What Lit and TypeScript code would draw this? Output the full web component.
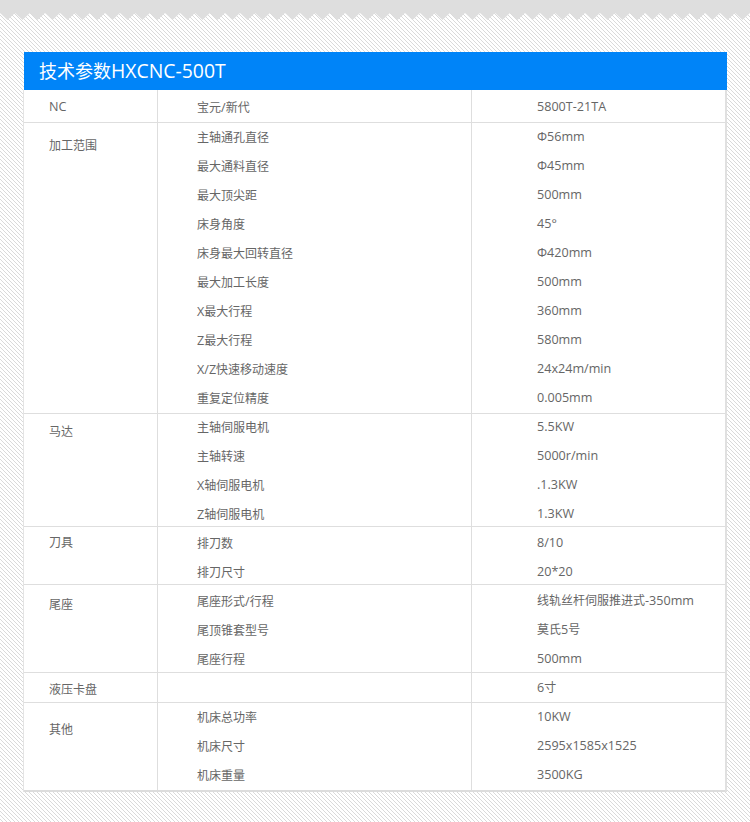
import { LitElement, html, css, svg } from "lit";
import { customElement } from "lit/decorators.js";

type Row = [string, string];
type Group = { label: string; h: number; lt: number; mt: number; rt: number; rows: Row[] };

const groups: Group[] = [
  { label: "NC", h: 32, lt: 4, mt: 5, rt: 4, rows: [["宝元/新代", "5800T-21TA"]] },
  { label: "加工范围", h: 290, lt: 10, mt: 2, rt: 1, rows: [
    ["主轴通孔直径", "Φ56mm"], ["最大通料直径", "Φ45mm"], ["最大顶尖距", "500mm"], ["床身角度", "45°"],
    ["床身最大回转直径", "Φ420mm"], ["最大加工长度", "500mm"], ["X最大行程", "360mm"], ["Z最大行程", "580mm"],
    ["X/Z快速移动速度", "24x24m/min"], ["重复定位精度", "0.005mm"] ] },
  { label: "马达", h: 112, lt: 5, mt: 1, rt: 0, rows: [
    ["主轴伺服电机", "5.5KW"], ["主轴转速", "5000r/min"], ["X轴伺服电机", ".1.3KW"], ["Z轴伺服电机", "1.3KW"] ] },
  { label: "刀具", h: 57, lt: 3, mt: 4, rt: 3, rows: [["排刀数", "8/10"], ["排刀尺寸", "20*20"]] },
  { label: "尾座", h: 87, lt: 7, mt: 4, rt: 3, rows: [
    ["尾座形式/行程", "线轨丝杆伺服推进式-350mm"], ["尾顶锥套型号", "莫氏5号"], ["尾座行程", "500mm"] ] },
  { label: "液压卡盘", h: 29, lt: 4, mt: 0, rt: 2, rows: [["", "6寸"]] },
  { label: "其他", h: 87, lt: 14, mt: 2, rt: 1, rows: [
    ["机床总功率", "10KW"], ["机床尺寸", "2595x1585x1525"], ["机床重量", "3500KG"] ] },
];

const teeth = Array.from({ length: 51 }, (_, i) => i * 15);
const zigzag = "M0 0H750V13L750 13" + teeth.map((x) => `L${750 - x - 7.5} 20L${750 - x - 15} 13`).join("") + "Z";

@customElement("app-root")
export class AppRoot extends LitElement {
  static styles = css`
    :host { display: block; width: 750px; height: 822px; overflow: hidden; background-color: #fff;
      background-image: linear-gradient(45deg, #dadada 15%, #fff 15%, #fff 50%, #dadada 50%, #dadada 65%, #fff 65%);
      background-size: 4px 4px;
      font-family: "Open Sans", "Noto Sans CJK SC", sans-serif; color: #666; font-size: 12px; }
    .page { display: flex; flex-direction: column; position: relative; padding: 52px 23px 0 24px; }
    .edge { position: absolute; left: 0; top: 0; width: 750px; height: 22px; }
    .title { height: 38px; background: #0084f8; color: #fff; font-size: 18px; line-height: 38px; padding-left: 15px;
      box-sizing: border-box; }
    .title .lat { font-size: 19.4px; }
    .table { width: 701px; background: #fff; border-bottom: 2px solid #dcdcdc; box-shadow: 2px 0 0 #e0e0e0, -1px 0 0 #e4e4e4; }
    .group { display: grid; grid-template-columns: 134px 314px 1fr; border-bottom: 1px solid #dedede; }
    .group:last-child { border-bottom: 0; }
    .cell { display: flex; flex-direction: column; gap: 4px; white-space: pre; box-sizing: border-box; }
    .label { padding-left: 25px; border-right: 1px solid #dedede; }
    .mid { padding-left: 39px; border-right: 1px solid #dedede; }
    .right { padding-left: 65px; }
    .line { height: 25px; line-height: 25px; }
    .lat { font-size: 12.6px; }
  `;

  private txt(s: string) {
    return s.split(/([\x00-\x7fΦ°]+)/).filter(Boolean).map((p) =>
      /^[\x00-\x7fΦ°]+$/.test(p) ? html`<span class="lat">${p}</span>` : html`${p}`);
  }

  render() {
    return html`<div class="page">
      <svg class="edge" viewBox="0 0 750 22">${svg`<path d=${zigzag} fill="#dedede" />`}</svg>
      <div class="title">${this.txt("技术参数HXCNC-500T")}</div>
      <div class="table">
        ${groups.map((g) => html`<div class="group" style="height:${g.h}px">
          <div class="cell label" style="padding-top:${g.lt}px"><div class="line">${this.txt(g.label)}</div></div>
          <div class="cell mid" style="padding-top:${g.mt}px">${g.rows.map((r) => html`<div class="line">${this.txt(r[0])}</div>`)}</div>
          <div class="cell right" style="padding-top:${g.rt}px">${g.rows.map((r) => html`<div class="line">${this.txt(r[1])}</div>`)}</div>
        </div>`)}
      </div>
    </div>`;
  }
}
